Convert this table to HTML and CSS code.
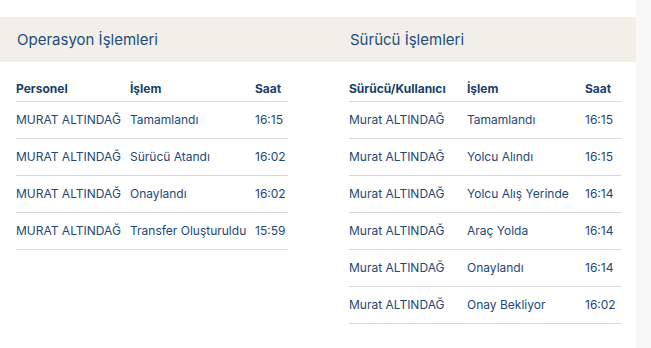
FILE: index.html
```html
<!DOCTYPE html>
<html lang="tr">
<head>
<meta charset="utf-8">
<title>İşlemler</title>
<link rel="stylesheet" href="styles.css">
</head>
<body>
<div class="card">
  <div class="band">
    <h2 class="title">Operasyon İşlemleri</h2>
    <h2 class="title">Sürücü İşlemleri</h2>
  </div>
  <div class="cols">
    <table class="log log-op">
      <thead>
        <tr><th class="c1">Personel</th><th class="c2">İşlem</th><th class="c3">Saat</th></tr>
      </thead>
      <tbody>
        <tr><td>MURAT ALTINDAĞ</td><td>Tamamlandı</td><td>16:15</td></tr>
        <tr><td>MURAT ALTINDAĞ</td><td>Sürücü Atandı</td><td>16:02</td></tr>
        <tr><td>MURAT ALTINDAĞ</td><td>Onaylandı</td><td>16:02</td></tr>
        <tr><td>MURAT ALTINDAĞ</td><td>Transfer Oluşturuldu</td><td>15:59</td></tr>
      </tbody>
    </table>
    <table class="log log-drv">
      <thead>
        <tr><th class="c1">Sürücü/Kullanıcı</th><th class="c2">İşlem</th><th class="c3">Saat</th></tr>
      </thead>
      <tbody>
        <tr><td>Murat ALTINDAĞ</td><td>Tamamlandı</td><td>16:15</td></tr>
        <tr><td>Murat ALTINDAĞ</td><td>Yolcu Alındı</td><td>16:15</td></tr>
        <tr><td>Murat ALTINDAĞ</td><td>Yolcu Alış Yerinde</td><td>16:14</td></tr>
        <tr><td>Murat ALTINDAĞ</td><td>Araç Yolda</td><td>16:14</td></tr>
        <tr><td>Murat ALTINDAĞ</td><td>Onaylandı</td><td>16:14</td></tr>
        <tr><td>Murat ALTINDAĞ</td><td>Onay Bekliyor</td><td>16:02</td></tr>
      </tbody>
    </table>
  </div>
</div>
</body>
</html>
```

FILE: styles.css
```css
html, body {
  margin: 0;
  padding: 0;
}
body {
  background: #f8f8f8;
  font-family: Inter, "Noto Sans", sans-serif;
  color: #1d4879;
}
.card {
  width: 636px;
  min-height: 348px;
  background: #ffffff;
  padding-top: 17px;
  box-sizing: border-box;
}
.band {
  background: #f2efe9;
  height: 45px;
  display: grid;
  grid-template-columns: 272px 272px;
  column-gap: 61px;
  padding-left: 16px;
  align-items: center;
}
.title {
  margin: 0;
  font-size: 15px;
  font-weight: 400;
  line-height: 18px;
  color: #1e4a7c;
  padding-left: 1px;
}
.cols {
  display: grid;
  grid-template-columns: 272px 272px;
  column-gap: 61px;
  padding-left: 16px;
  align-items: start;
  margin-top: 20px;
}
.log {
  width: 272px;
  border-collapse: collapse;
  table-layout: fixed;
  font-size: 12px;
  line-height: 14px;
}
.log th {
  text-align: left;
  font-weight: 700;
  color: #173f6d;
  padding: 0 0 5px 0;
  border-bottom: 1px solid #d8d8d8;
}
.log td {
  height: 36px;
  padding: 0;
  vertical-align: middle;
  white-space: nowrap;
  border-bottom: 1px solid #d8d8d8;
}
.log-op .c1 { width: 114px; }
.log-op .c2 { width: 125px; }
.log-op .c3 { width: 33px; }
.log-drv .c1 { width: 118px; }
.log-drv .c2 { width: 118px; }
.log-drv .c3 { width: 36px; }
```
